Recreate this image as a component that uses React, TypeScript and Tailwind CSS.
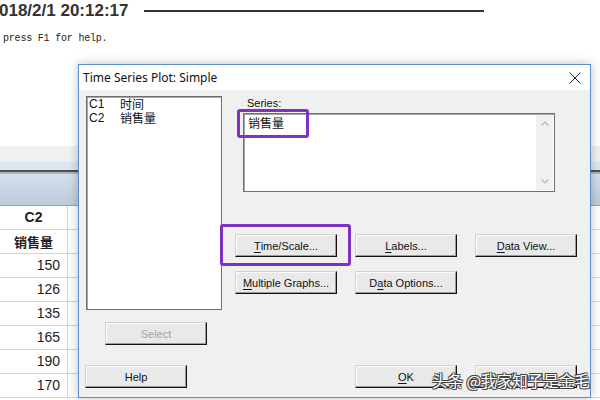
import React from "react";

const sans = "font-['Liberation_Sans','Noto_Sans_CJK_SC',sans-serif]";

function Btn({
  children,
  className = "",
  disabled = false,
}: {
  children: React.ReactNode;
  className?: string;
  disabled?: boolean;
}) {
  return (
    <div
      className={`h-[23px] w-[102px] flex items-center justify-center bg-[#e9e9e9] border border-t-[#d2d2d2] border-l-[#d2d2d2] border-r-[#111] border-b-[#111] shadow-[inset_-1px_-1px_0_#9c9c9c,inset_1px_1px_0_#fbfbfb] text-[11px] leading-[12px] ${
        disabled ? "text-[#a3a3a3]" : "text-[#111]"
      } ${className}`}
    >
      {children}
    </div>
  );
}

function U({ children }: { children: React.ReactNode }) {
  return <span className="underline underline-offset-2 decoration-1">{children}</span>;
}

const rows = ["150", "126", "135", "165", "190", "170"];

export default function App() {
  return (
    <div className={`relative w-[600px] h-[400px] overflow-hidden bg-white ${sans}`}>
      {/* Top white area */}
      <div className="h-[146px] bg-white">
        <div className="h-[22px] flex items-center">
          <span className="ml-[-1px] text-[17px] font-bold text-[#333] leading-[20px]">
            018/2/1 20:12:17
          </span>
          <div className="ml-[15px] w-[340px] h-[2px] bg-[#333]" />
        </div>
        <div className="mt-[11px] ml-[3px] h-[12px] leading-[12px] text-[10px] tracking-[-0.2px] text-[#222] font-['Liberation_Mono',monospace]">
          press F1 for help.
        </div>
      </div>
      {/* Toolbar bands */}
      <div className="h-[16px] bg-[#f0f0f0]" />
      <div className="h-[8px] bg-[#dce7f2]" />
      <div className="h-[2px] bg-[#4f4f4f]" />
      <div className="h-[2px] bg-[#a9b4bf]" />
      <div className="h-[31px] bg-gradient-to-b from-[#d4e0ec] to-[#bccbda]" />
      <div className="h-px bg-[#9aa3ad]" />
      {/* Table */}
      <div className="flex flex-col">
        <div className="flex h-[24px] border-b border-[#d6d6d6]">
          <div className="w-[68px] border-r border-[#d6d6d6] flex items-center justify-center text-[14px] font-bold text-[#222]">
            C2
          </div>
          <div className="flex-1" />
        </div>
        <div className="flex h-[24px] border-b border-[#d6d6d6]">
          <div className="w-[68px] border-r border-[#d6d6d6] flex items-center justify-center text-[13px] font-bold text-[#222] font-['Noto_Sans_CJK_SC',sans-serif]">
            销售量
          </div>
          <div className="flex-1" />
        </div>
        {rows.map((r) => (
          <div key={r} className="flex h-[24px] border-b border-[#d6d6d6]">
            <div className="w-[68px] border-r border-[#d6d6d6] flex items-center justify-end pr-[7px] text-[14px] text-[#222]">
              {r}
            </div>
            <div className="flex-1" />
          </div>
        ))}
      </div>

      {/* Dialog */}
      <div className="absolute left-[78px] top-[64px] w-[513px] border border-[#5b8dcc] bg-[#f0f0f0] shadow-[0_0_10px_rgba(0,0,0,0.25)]">
        <div className="h-[25px] bg-white flex items-center justify-between pl-[4px] pr-[9px]">
          <span className="text-[12px] text-[#111] font-['Noto_Sans',sans-serif] leading-[14px]">
            Time Series Plot: Simple
          </span>
          <svg width="12" height="12" viewBox="0 0 12 12">
            <path d="M0.5 0.5 L11.5 11.5 M11.5 0.5 L0.5 11.5" stroke="#222" strokeWidth="1" />
          </svg>
        </div>
        <div className="h-[307px] pt-[6px] pl-[6px] flex flex-col">
          <div className="flex h-[249px]">
            {/* left column */}
            <div className="w-[138px] flex flex-col">
              <div className="ml-[1px] w-[136px] h-[214px] bg-white border border-[#6f6f6f] shadow-[inset_1px_1px_0_#a8a8a8] pl-[2px] text-[12px] text-[#111]">
                <div className="flex h-[14px] items-center">
                  <span className="w-[31px] leading-[14px]">C1</span>
                  <span className="leading-[14px] font-['Noto_Sans_CJK_SC',sans-serif]">时间</span>
                </div>
                <div className="flex h-[14px] items-center">
                  <span className="w-[31px] leading-[14px]">C2</span>
                  <span className="leading-[14px] font-['Noto_Sans_CJK_SC',sans-serif]">销售量</span>
                </div>
              </div>
              <Btn disabled className="mt-[12px] ml-[20px]">
                Select
              </Btn>
            </div>
            {/* right column */}
            <div className="ml-[12px] flex flex-col">
              <div className="ml-[12px] mt-[1px] h-[12px] text-[11px] leading-[12px] text-[#111]">
                Series:
              </div>
              <div className="ml-[8px] mt-[4px] w-[312px] h-[79px] bg-white border border-[#6f6f6f] shadow-[inset_1px_1px_0_#a8a8a8] flex">
                <div className="flex-1 pl-[4px] pt-[2px] text-[12px] leading-[14px] text-[#111] font-['Noto_Sans_CJK_SC',sans-serif]">
                  销售量
                </div>
                <div className="w-[17px] my-[1px] mr-[1px] bg-[#f0f0f0] flex flex-col items-center justify-between py-[6px]">
                  <svg width="8" height="5" viewBox="0 0 8 5">
                    <path d="M0.5 4.5 L4 1 L7.5 4.5" fill="none" stroke="#b4b4b4" strokeWidth="1.2" />
                  </svg>
                  <svg width="8" height="5" viewBox="0 0 8 5">
                    <path d="M0.5 0.5 L4 4 L7.5 0.5" fill="none" stroke="#b4b4b4" strokeWidth="1.2" />
                  </svg>
                </div>
              </div>
              <div className="mt-[42px] flex gap-[18px]">
                <Btn>
                  <U>T</U>ime/Scale...
                </Btn>
                <Btn>
                  <U>L</U>abels...
                </Btn>
                <Btn>
                  <U>D</U>ata View...
                </Btn>
              </div>
              <div className="mt-[14px] flex gap-[18px]">
                <Btn>
                  <U>M</U>ultiple Graphs...
                </Btn>
                <Btn>
                  D<U>a</U>ta Options...
                </Btn>
              </div>
            </div>
          </div>
          <div className="mt-[20px] flex">
            <Btn>Help</Btn>
            <Btn className="ml-[168px]">
              <U>O</U>K
            </Btn>
            <Btn className="ml-[18px]">Cancel</Btn>
          </div>
        </div>

        {/* Purple annotation boxes */}
        <div className="absolute left-[158px] top-[44px] w-[72px] h-[29px] border-[3px] border-[#7e31c4] rounded-[3px]" />
        <div className="absolute left-[141px] top-[159px] w-[131px] h-[42px] border-[3px] border-[#7e31c4] rounded-[3px]" />
      </div>

      {/* Watermark */}
      <div className="absolute left-[432px] top-[370px] text-[15.5px] leading-[20px] text-white font-['Noto_Sans_CJK_SC',sans-serif] [text-shadow:1px_1px_0_#444,-1px_-1px_0_#444,1px_-1px_0_#444,-1px_1px_0_#444] whitespace-nowrap">
        头条 @我家知子是金毛
      </div>
    </div>
  );
}
